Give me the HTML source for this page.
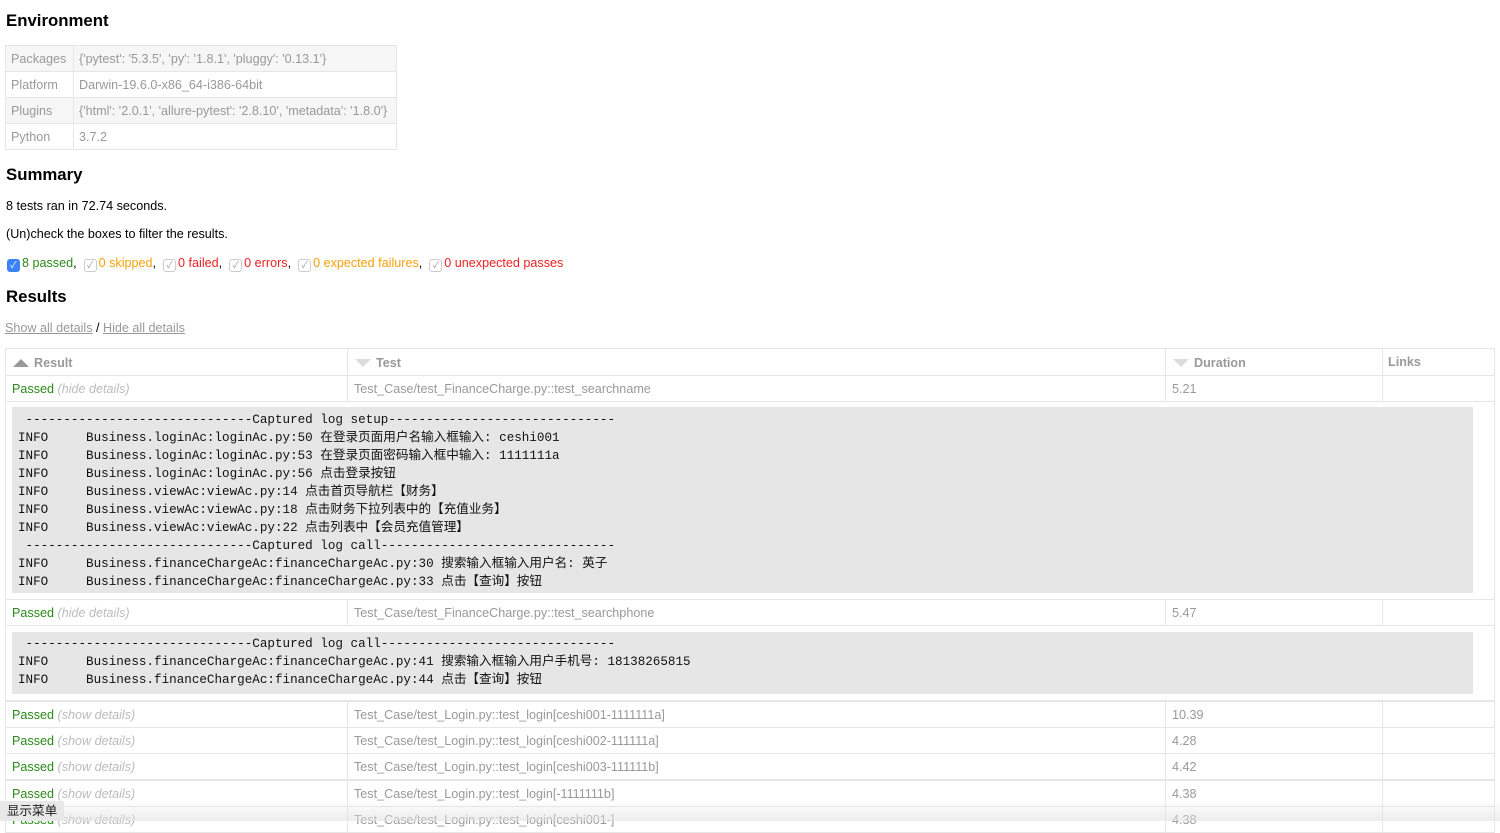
<!DOCTYPE html>
<html><head><meta charset="utf-8"><style>
body{margin:0;width:1500px;height:821px;overflow:hidden;font-family:"Liberation Sans","Noto Sans CJK SC",sans-serif;font-size:12.6px;color:#000;background:#fff;position:relative}
.a{position:absolute;white-space:nowrap}
h2{position:absolute;margin:0;font-size:16.8px;font-weight:bold;left:6px}
table.env{position:absolute;left:5px;top:45px;border-collapse:collapse;color:#999;font-size:12.6px}
table.env td{border:1px solid #e6e6e6;height:25px;padding:0 5px;white-space:nowrap}
table.env tr:nth-child(odd) td{background:#f6f6f6}
.cb{display:inline-block;width:11px;height:11px;border:1px solid #ccc;border-radius:3px;vertical-align:-1px;margin-right:2px;font-size:9px;line-height:11px;text-align:center;color:#999}
.cb.on{background:#3b82f6;border-color:#3b82f6;color:#fff}
.g{color:#2a8a1a}.o{color:#f4a20a}.r{color:#e22}
.row{position:absolute;left:5px;width:1490px;height:27px;border:1px solid #e6e6e6;box-sizing:border-box;color:#999;font-size:12.6px;background:#fff}
.row>span{position:absolute;top:6px;white-space:nowrap}
.vl{position:absolute;top:0;bottom:0;width:1px;background:#e6e6e6}
.log{position:absolute;left:12px;width:1461px;background:#e6e6e6;font-family:"Liberation Mono","Noto Sans CJK SC",monospace;font-size:12.6px;color:#111;white-space:pre;line-height:18px;padding-left:6px;box-sizing:border-box}
.logwrap{position:absolute;left:5px;width:1490px;border:1px solid #e6e6e6;box-sizing:border-box}
.i{font-style:italic;color:#bbb}
.tri{display:inline-block;width:0;height:0;border-left:8px solid transparent;border-right:8px solid transparent;margin-right:5px}
</style></head><body>
<h2 style="top:11px">Environment</h2>
<table class="env">
<tr><td style="width:57px">Packages</td><td style="width:312px">{'pytest': '5.3.5', 'py': '1.8.1', 'pluggy': '0.13.1'}</td></tr>
<tr><td>Platform</td><td>Darwin-19.6.0-x86_64-i386-64bit</td></tr>
<tr><td>Plugins</td><td>{'html': '2.0.1', 'allure-pytest': '2.8.10', 'metadata': '1.8.0'}</td></tr>
<tr><td>Python</td><td>3.7.2</td></tr>
</table>
<h2 style="top:165px">Summary</h2>
<div class="a" style="left:6px;top:199px">8 tests ran in 72.74 seconds.</div>
<div class="a" style="left:6px;top:227px">(Un)check the boxes to filter the results.</div>
<div class="a" style="left:7px;top:256px"><span class="cb on">✓</span><span class="g">8 passed</span>, &nbsp;<span class="cb">✓</span><span class="o">0 skipped</span>, &nbsp;<span class="cb">✓</span><span class="r">0 failed</span>, &nbsp;<span class="cb">✓</span><span class="r">0 errors</span>, &nbsp;<span class="cb">✓</span><span class="o">0 expected failures</span>, &nbsp;<span class="cb">✓</span><span class="r">0 unexpected passes</span></div>
<h2 style="top:287px">Results</h2>
<div class="a" style="left:5px;top:321px;color:#999"><u>Show all details</u> <span style="color:#000">/</span> <u>Hide all details</u></div>

<div class="row" style="top:348px;height:28px;font-weight:bold"><div class="vl" style="left:341px"></div><div class="vl" style="left:1159px"></div><div class="vl" style="left:1376px"></div>
<span style="left:7px;top:7px"><span class="tri" style="border-bottom:8px solid #999"></span>Result</span>
<span style="left:349px;top:7px"><span class="tri" style="border-top:8px solid #ddd"></span>Test</span>
<span style="left:1167px;top:7px"><span class="tri" style="border-top:8px solid #ddd"></span>Duration</span>
<span style="left:1382px;top:6px">Links</span></div>

<div class="row" style="top:375px"><div class="vl" style="left:341px"></div><div class="vl" style="left:1159px"></div><div class="vl" style="left:1376px"></div><span style="left:6px"><span class="g">Passed</span> <span class="i">(hide details)</span></span><span style="left:348px">Test_Case/test_FinanceCharge.py::test_searchname</span><span style="left:1166px">5.21</span></div>
<div class="logwrap" style="top:401px;height:199px"></div>
<div class="log" style="top:407px;height:186px;padding-top:4px"> ------------------------------Captured log setup------------------------------
INFO     Business.loginAc:loginAc.py:50 在登录页面用户名输入框输入: ceshi001
INFO     Business.loginAc:loginAc.py:53 在登录页面密码输入框中输入: 1111111a
INFO     Business.loginAc:loginAc.py:56 点击登录按钮
INFO     Business.viewAc:viewAc.py:14 点击首页导航栏【财务】
INFO     Business.viewAc:viewAc.py:18 点击财务下拉列表中的【充值业务】
INFO     Business.viewAc:viewAc.py:22 点击列表中【会员充值管理】
 ------------------------------Captured log call-------------------------------
INFO     Business.financeChargeAc:financeChargeAc.py:30 搜索输入框输入用户名: 英子
INFO     Business.financeChargeAc:financeChargeAc.py:33 点击【查询】按钮</div>

<div class="row" style="top:599px"><div class="vl" style="left:341px"></div><div class="vl" style="left:1159px"></div><div class="vl" style="left:1376px"></div><span style="left:6px"><span class="g">Passed</span> <span class="i">(hide details)</span></span><span style="left:348px">Test_Case/test_FinanceCharge.py::test_searchphone</span><span style="left:1166px">5.47</span></div>
<div class="logwrap" style="top:625px;height:76px"></div>
<div class="log" style="top:632px;height:62px;padding-top:3px"> ------------------------------Captured log call-------------------------------
INFO     Business.financeChargeAc:financeChargeAc.py:41 搜索输入框输入用户手机号: 18138265815
INFO     Business.financeChargeAc:financeChargeAc.py:44 点击【查询】按钮</div>

<div class="row" style="top:701px"><div class="vl" style="left:341px"></div><div class="vl" style="left:1159px"></div><div class="vl" style="left:1376px"></div><span style="left:6px"><span class="g">Passed</span> <span class="i">(show details)</span></span><span style="left:348px">Test_Case/test_Login.py::test_login[ceshi001-1111111a]</span><span style="left:1166px">10.39</span></div>
<div class="row" style="top:727px"><div class="vl" style="left:341px"></div><div class="vl" style="left:1159px"></div><div class="vl" style="left:1376px"></div><span style="left:6px"><span class="g">Passed</span> <span class="i">(show details)</span></span><span style="left:348px">Test_Case/test_Login.py::test_login[ceshi002-111111a]</span><span style="left:1166px">4.28</span></div>
<div class="row" style="top:753px"><div class="vl" style="left:341px"></div><div class="vl" style="left:1159px"></div><div class="vl" style="left:1376px"></div><span style="left:6px"><span class="g">Passed</span> <span class="i">(show details)</span></span><span style="left:348px">Test_Case/test_Login.py::test_login[ceshi003-111111b]</span><span style="left:1166px">4.42</span></div>
<div class="row" style="top:780px"><div class="vl" style="left:341px"></div><div class="vl" style="left:1159px"></div><div class="vl" style="left:1376px"></div><span style="left:6px"><span class="g">Passed</span> <span class="i">(show details)</span></span><span style="left:348px">Test_Case/test_Login.py::test_login[-1111111b]</span><span style="left:1166px">4.38</span></div>
<div class="row" style="top:806px"><div class="vl" style="left:341px"></div><div class="vl" style="left:1159px"></div><div class="vl" style="left:1376px"></div><span style="left:6px"><span class="g">Passed</span> <span class="i">(show details)</span></span><span style="left:348px">Test_Case/test_Login.py::test_login[ceshi001-]</span><span style="left:1166px">4.38</span></div>
<div style="position:absolute;left:0;right:0;top:800px;height:21px;background:linear-gradient(rgba(240,240,240,0),rgba(225,225,225,0.6))"></div>
<div class="a" style="left:0;top:801px;height:20px;width:64px;background:#e8e8e8;font-size:12.6px;line-height:20px;text-align:center;color:#222">显示菜单</div>
</body></html>
